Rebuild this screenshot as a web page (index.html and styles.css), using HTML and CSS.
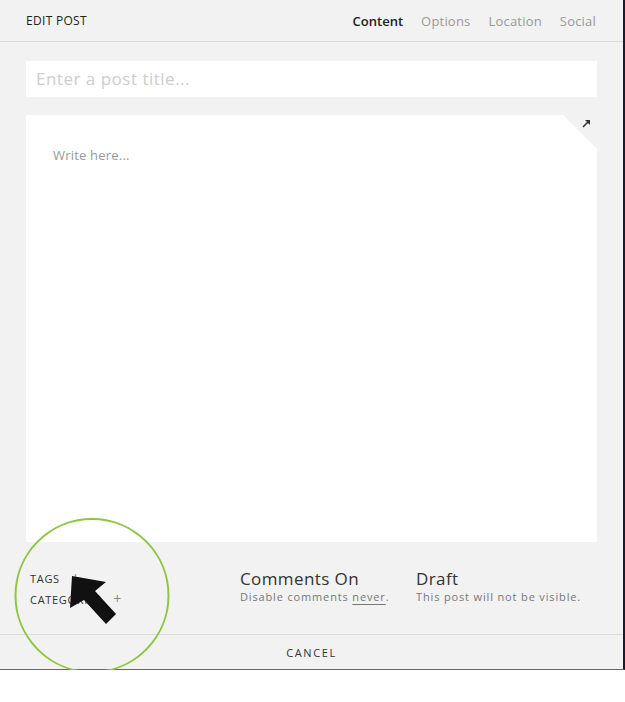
FILE: index.html
```html
<!DOCTYPE html>
<html lang="en">
<head>
    <meta charset="UTF-8">
    <title>Edit Post</title>
    <link rel="stylesheet" href="styles.css">
</head>
<body>
    <div class="modal">
        <header class="modal-head">
            <h1>Edit Post</h1>
            <nav class="tabs">
                <a class="active">Content</a>
                <a>Options</a>
                <a>Location</a>
                <a>Social</a>
            </nav>
        </header>

        <div class="modal-body">
            <div class="title-input">Enter a post title...</div>

            <div class="editor-wrap">
                <div class="editor">
                    <p>Write here...</p>
                </div>
                <!-- expand toggle sits in the cut corner -->
                <svg class="expand" width="9" height="9" viewBox="0 0 9 9">
                    <path d="M1 8 L7 2" stroke="#333" stroke-width="1.6"/>
                    <path d="M3 1 H8 V6 Z" fill="#333"/>
                </svg>
            </div>

            <div class="meta">
                <div class="taxonomy">
                    <div>Tags <span class="plus">+</span></div>
                    <div>Categories <span class="plus">+</span></div>
                </div>
                <div class="toggle">
                    <h3>Comments On</h3>
                    <p>Disable comments <u>never</u>.</p>
                </div>
                <div class="toggle">
                    <h3>Draft</h3>
                    <p>This post will not be visible.</p>
                </div>
            </div>
        </div>

        <footer class="modal-foot">Cancel</footer>

        <!-- annotation: highlight circle and pointer -->
        <svg class="annotation" width="200" height="190" viewBox="0 500 200 190">
            <circle cx="92" cy="595.5" r="76.5" fill="none" stroke="#8dc63f" stroke-width="2"/>
            <polygon points="72,576 106,582 95,591 116,614 106,624 84,600 70,608" fill="#111"/>
        </svg>
    </div>
</body>
</html>
```

FILE: styles.css
```css
:root {
    --panel-bg: #f2f2f2;
    --line: #dcdcdc;
    --text-dark: #333;
    --text-muted: #8a8a8a;
}

body {
    margin: 0;
    background: #fff;
    font-family: "Open Sans", Arial, sans-serif;
    color: var(--text-dark);
}

.modal {
    position: relative;
    width: 623px;
    height: 669px;
    background: var(--panel-bg);
    border-right: 2px solid #1d1a2c;
    border-bottom: 1px solid #666;
    display: flex;
    flex-direction: column;
}

.modal-head {
    height: 41px;
    border-bottom: 1px solid var(--line);
    display: flex;
    align-items: center;
    justify-content: space-between;
    padding: 0 26px;
}

.modal-head h1 {
    margin: 0;
    font-size: 12px;
    font-weight: 400;
    text-transform: uppercase;
    letter-spacing: 0.3px;
    color: #222;
}

.tabs {
    display: flex;
    gap: 18px;
    padding-right: 1px;
}

.tabs a {
    font-size: 13px;
    letter-spacing: 0.2px;
    color: #999;
}

.tabs a.active {
    color: #222;
    font-weight: 600;
    letter-spacing: 0;
}

.modal-body {
    flex: 1;
    display: flex;
    flex-direction: column;
    padding: 19px 26px 0;
}

.title-input {
    height: 36px;
    line-height: 35px;
    background: #fff;
    padding: 0 10px;
    font-size: 17px;
    letter-spacing: 0.5px;
    color: #cdcdcd;
}

.editor-wrap {
    position: relative;
    margin-top: 18px;
}

.editor {
    height: 427px;
    background: #fff;
    clip-path: polygon(0 0, calc(100% - 34px) 0, 100% 34px, 100% 100%, 0 100%);
}

.editor p {
    margin: 0;
    padding: 31px 27px;
    font-size: 13px;
    letter-spacing: 0.2px;
    color: #999;
}

.expand {
    position: absolute;
    top: 4px;
    right: 6px;
}

.meta {
    flex: 1;
    display: grid;
    grid-template-columns: 210px 176px 1fr;
    align-items: center;
    padding: 0 0 2px 4px;
}

.taxonomy {
    font-size: 11px;
    text-transform: uppercase;
    letter-spacing: 0.7px;
    line-height: 20px;
    color: #333;
    margin-top: 4px;
}

.plus {
    margin-left: 8px;
    font-size: 14px;
    color: #888;
}

.toggle h3 {
    margin: 0;
    font-size: 17px;
    font-weight: 400;
    letter-spacing: 0.4px;
    line-height: 20px;
    color: #333;
}

.toggle p {
    margin: 0;
    font-size: 11px;
    letter-spacing: 0.85px;
    line-height: 16px;
    color: #777;
}

.toggle u {
    text-decoration-color: #777;
    text-underline-offset: 3px;
}

.modal-foot {
    height: 34px;
    border-top: 1px solid var(--line);
    display: flex;
    align-items: center;
    justify-content: center;
    font-size: 11px;
    text-transform: uppercase;
    letter-spacing: 1.6px;
    color: #333;
}

.annotation {
    position: absolute;
    left: 0;
    top: 500px;
}
```
